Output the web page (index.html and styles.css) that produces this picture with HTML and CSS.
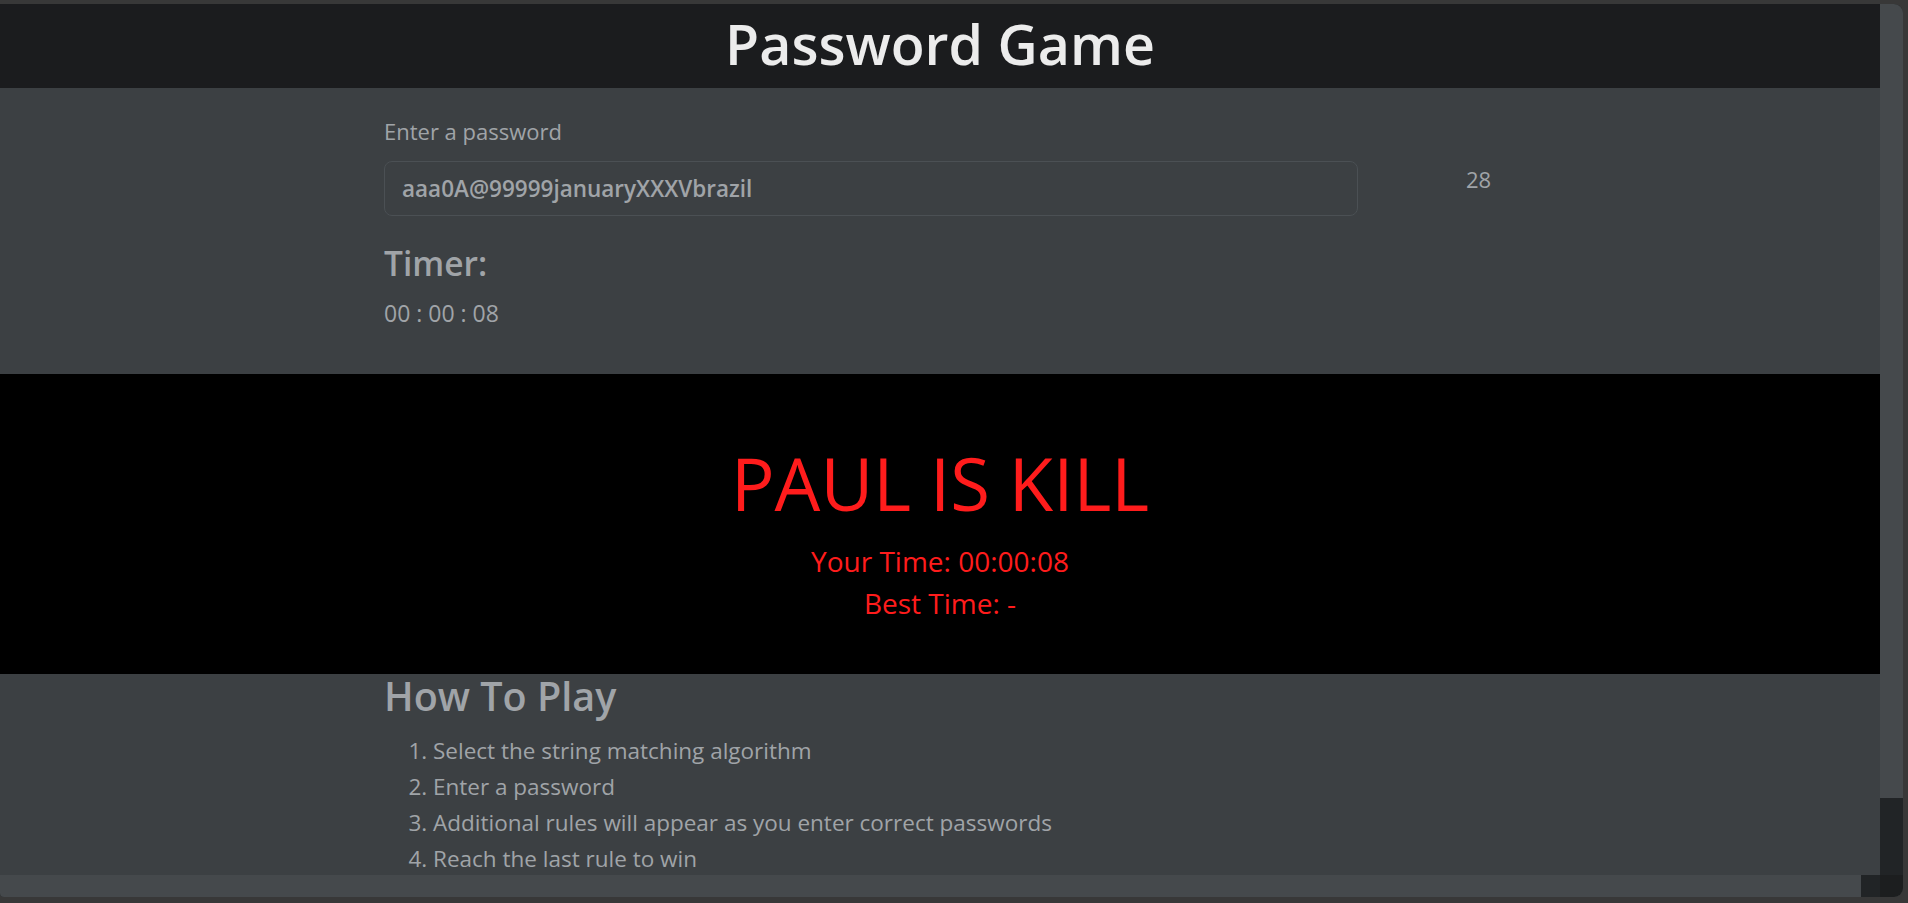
FILE: index.html
```html
<!DOCTYPE html>
<html lang="en">
<head>
<meta charset="utf-8">
<title>Password Game</title>
<link rel="stylesheet" href="styles.css">
</head>
<body>
<div class="window">
  <div class="viewport">
    <header class="topbar">
      <h1 class="title">Password Game</h1>
    </header>
    <section class="game">
      <label class="field-label" for="pw">Enter a password</label>
      <div class="pw-row">
        <input id="pw" class="pw-input" type="text" value="aaa0A@99999januaryXXXVbrazil">
        <span class="count">28</span>
      </div>
      <h4 class="timer-title">Timer:</h4>
      <p class="timer">00 : 00 : 08</p>
    </section>
    <section class="gameover">
      <h2 class="dead">PAUL IS KILL</h2>
      <p class="result">Your Time: 00:00:08</p>
      <p class="result">Best Time: -</p>
    </section>
    <section class="howto">
      <h2 class="howto-title">How To Play</h2>
      <ol class="steps">
        <li>Select the string matching algorithm</li>
        <li>Enter a password</li>
        <li>Additional rules will appear as you enter correct passwords</li>
        <li>Reach the last rule to win</li>
      </ol>
    </section>
  </div>
  <div class="vscroll"><div class="vthumb"></div></div>
  <div class="hscroll"><div class="hthumb"></div></div>
  <div class="corner"></div>
</div>
</body>
</html>
```

FILE: styles.css
```css
html, body {
  margin: 0;
  padding: 0;
}
body {
  background: #383838;
  height: 903px;
  overflow: hidden;
  font-family: "Open Sans", "Noto Sans", sans-serif;
  box-sizing: border-box;
  padding: 4px 5px 6px 0;
}
.window {
  height: 893px;
  display: grid;
  grid-template-columns: 1fr 23px;
  grid-template-rows: 871px 22px;
  border-radius: 0 9px 9px 4px;
  overflow: hidden;
  background: #3c4043;
}
.viewport {
  overflow: hidden;
  background: #3c4043;
  color: #a0a4a8;
}
.topbar {
  height: 84px;
  background: #1b1c1e;
  display: flex;
  justify-content: center;
  align-items: flex-start;
}
.title {
  margin: 0;
  font-size: 55.5px;
  line-height: 79px;
  font-weight: 600;
  color: #ececec;
}
.game {
  height: 286px;
  box-sizing: border-box;
  padding: 28px 0 0 384px;
}
.field-label {
  display: block;
  font-size: 22px;
  line-height: 30px;
}
.pw-row {
  display: flex;
  align-items: flex-start;
  margin-top: 15px;
}
.pw-input {
  width: 974px;
  height: 55px;
  box-sizing: border-box;
  margin: 0;
  padding: 0 17px;
  background: #3c4043;
  border: 1px solid #4b5054;
  border-radius: 8px;
  color: #a0a4a8;
  font-family: inherit;
  font-size: 22.5px;
  font-weight: 600;
  outline: none;
}
.count {
  margin: 3px 0 0 108px;
  font-size: 22px;
  line-height: 30px;
}
.timer-title {
  margin: 27px 0 0;
  font-size: 33.5px;
  line-height: 40px;
  font-weight: 600;
}
.timer {
  margin: 15px 0 0;
  font-size: 23px;
  line-height: 30px;
}
.gameover {
  height: 300px;
  box-sizing: border-box;
  background: #000;
  color: #ff1c1c;
  text-align: center;
  padding-top: 66px;
}
.dead {
  margin: 0;
  font-size: 72.5px;
  line-height: 87px;
  font-weight: 400;
}
.result {
  margin: 0;
  font-size: 28px;
  line-height: 42px;
}
.dead + .result {
  margin-top: 13px;
}
.howto {
  padding: 0 0 0 384px;
}
.howto-title {
  margin: 0;
  font-size: 39.5px;
  line-height: 44px;
  font-weight: 600;
}
.steps {
  margin: 15px 0 0;
  padding-left: 49px;
  font-size: 22.5px;
  line-height: 36px;
}
.vscroll {
  background: #212426;
}
.vthumb {
  height: 794px;
  background: #45494c;
}
.hscroll {
  background: #212426;
}
.hthumb {
  width: 1861px;
  height: 100%;
  background: #45494c;
}
.corner {
  background: #1c1e1f;
}
```
